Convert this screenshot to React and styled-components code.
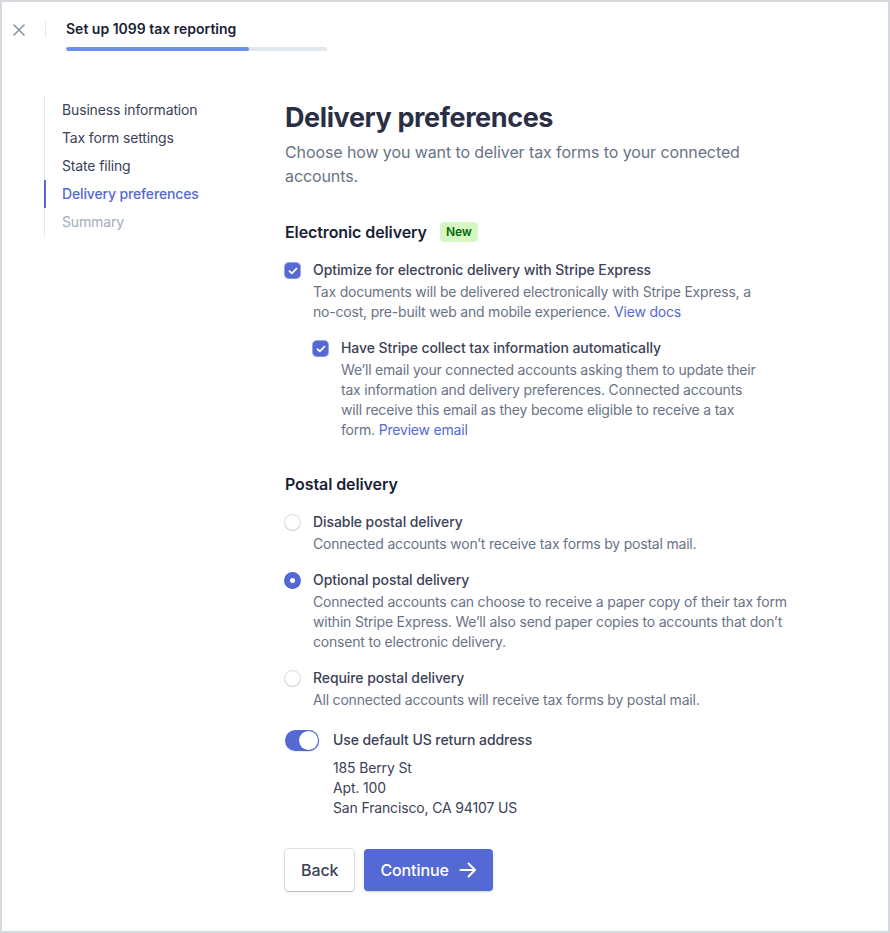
import React from "react";
import styled, { createGlobalStyle } from "styled-components";

const GlobalStyle = createGlobalStyle`
  html, body {
    margin: 0;
    padding: 0;
    background: #fff;
  }
  body {
    font-family: Inter, "Noto Sans", "Liberation Sans", sans-serif;
    color: #3c4257;
    -webkit-font-smoothing: antialiased;
  }
  * { box-sizing: border-box; }
`;

const Frame = styled.div`
  width: 890px;
  height: 933px;
  border: 2px solid #d5d8dd;
  background: #fff;
  overflow: hidden;
`;

const TopBar = styled.header`
  display: flex;
  align-items: flex-start;
  padding: 18px 0 0 10px;
  height: 94px;
`;

const CloseButton = styled.button`
  width: 14px;
  height: 14px;
  padding: 0;
  margin-top: 3px;
  border: 0;
  background: none;
  display: flex;
  align-items: center;
  justify-content: center;
  cursor: pointer;
`;

const Divider = styled.div`
  width: 1px;
  height: 17px;
  background: #e3e8ee;
  margin: 1px 20px 0 19px;
`;

const TitleBlock = styled.div`
  display: flex;
  flex-direction: column;
  gap: 9px;
`;

const Title = styled.div`
  font-size: 14px;
  font-weight: 600;
  color: #1a1f36;
  line-height: 18px;
`;

const Progress = styled.div`
  width: 261px;
  height: 4px;
  border-radius: 2px;
  background: #e3e8ee;
  overflow: hidden;
`;

const ProgressFill = styled.div`
  height: 100%;
  border-radius: 2px;
  background: #6b8ff0;
`;

const Body = styled.div`
  display: flex;
  padding-left: 42px;
`;

const Steps = styled.nav`
  width: 241px;
  flex-shrink: 0;
  align-self: flex-start;
  border-left: 1px solid #e3e8ee;
  display: flex;
  flex-direction: column;
`;

const Step = styled.div`
  font-size: 14px;
  line-height: 28px;
  letter-spacing: -0.15px;
  padding-left: 16px;
  margin-left: -1px;
  border-left: 2px solid ${({ $active }) => ($active ? "#5469d4" : "transparent")};
  color: ${({ $active, $muted }) => ($active ? "#5469d4" : $muted ? "#a3acb9" : "#3c4257")};
  font-weight: ${({ $active }) => ($active ? 500 : 400)};
`;

const Main = styled.main`
  width: 515px;
  display: flex;
  flex-direction: column;
`;

const Heading = styled.h1`
  margin: 4px 0 0;
  font-size: 27px;
  line-height: 36px;
  font-weight: 700;
  color: #2a2f45;
  letter-spacing: -0.4px;
`;

const Lead = styled.p`
  margin: 4px 0 0;
  font-size: 16px;
  line-height: 24px;
  letter-spacing: -0.1px;
  color: #697386;
  max-width: 470px;
`;

const SectionTitle = styled.h2`
  margin: ${({ $top }) => $top}px 0 0;
  display: flex;
  align-items: center;
  gap: 13px;
  font-size: 16px;
  line-height: 24px;
  font-weight: 600;
  letter-spacing: -0.1px;
  color: #1a1f36;
`;

const Badge = styled.span`
  font-size: 12px;
  line-height: 20px;
  font-weight: 600;
  padding: 0 6px;
  border-radius: 4px;
  background: #d7f7c2;
  color: #05690d;
`;

const Option = styled.div`
  display: flex;
  gap: 13px;
  margin-top: ${({ $top }) => $top}px;
  margin-left: ${({ $indent }) => ($indent ? 28 : 0)}px;
`;

const Control = styled.div`
  width: 15px;
  flex-shrink: 0;
  padding-top: 3px;
`;

const Checkbox = styled.span`
  display: flex;
  align-items: center;
  justify-content: center;
  width: 15px;
  height: 15px;
  border-radius: 4px;
  background: #5469d4;
  box-shadow: 0 1px 1px rgba(0, 0, 0, 0.12), 0 0 0 1px rgba(84, 105, 212, 0.6);
`;

const Radio = styled.span`
  display: block;
  width: 15px;
  height: 15px;
  border-radius: 50%;
  background: ${({ $checked }) => ($checked ? "#5469d4" : "#fff")};
  box-shadow: ${({ $checked }) =>
    $checked
      ? "0 1px 1px rgba(0,0,0,0.12), 0 0 0 1px #5469d4"
      : "0 1px 1px rgba(0,0,0,0.1), 0 0 0 1px rgba(60,66,87,0.18)"};
  position: relative;
  &::after {
    content: "";
    display: ${({ $checked }) => ($checked ? "block" : "none")};
    position: absolute;
    left: 5px;
    top: 5px;
    width: 5px;
    height: 5px;
    border-radius: 50%;
    background: #fff;
  }
`;

const OptionText = styled.div`
  display: flex;
  flex-direction: column;
`;

const Label = styled.div`
  font-size: 14px;
  line-height: 20px;
  font-weight: 500;
  letter-spacing: -0.08px;
  color: #3c4257;
`;

const Help = styled.div`
  font-size: 14px;
  line-height: 20px;
  letter-spacing: -0.2px;
  color: #697386;
  margin-top: 2px;
  max-width: ${({ $width }) => $width}px;
`;

const Link = styled.a`
  color: #5469d4;
  text-decoration: none;
`;

const ToggleRow = styled.div`
  display: flex;
  gap: 14px;
  margin-top: 20px;
`;

const Toggle = styled.span`
  width: 34px;
  height: 21px;
  flex-shrink: 0;
  border-radius: 11px;
  background: #5469d4;
  display: flex;
  align-items: center;
  justify-content: flex-end;
  padding-right: 1px;
  box-shadow: 0 1px 1px rgba(0, 0, 0, 0.1);
`;

const Knob = styled.span`
  width: 19px;
  height: 19px;
  border-radius: 50%;
  background: #fff;
  box-shadow: 0 0 0 1px #5469d4, 0 1px 2px rgba(0, 0, 0, 0.2);
`;

const Address = styled.div`
  margin-top: 8px;
  font-size: 14px;
  line-height: 20px;
  letter-spacing: -0.15px;
  color: #3c4257;
`;

const Actions = styled.div`
  display: flex;
  gap: 10px;
  margin-top: 31px;
`;

const Button = styled.button`
  height: 42px;
  padding: 0 16px;
  display: flex;
  align-items: center;
  gap: 10px;
  font-family: inherit;
  font-size: 16px;
  font-weight: 500;
  letter-spacing: -0.1px;
  border-radius: 4px;
  border: 0;
  cursor: pointer;
  color: ${({ $primary }) => ($primary ? "#fff" : "#3c4257")};
  background: ${({ $primary }) => ($primary ? "#5469d4" : "#fff")};
  box-shadow: ${({ $primary }) =>
    $primary
      ? "0 1px 1px rgba(0,0,0,0.12), 0 2px 5px rgba(60,66,87,0.08)"
      : "0 0 0 1px rgba(60,66,87,0.16), 0 2px 5px rgba(60,66,87,0.08), 0 1px 1px rgba(0,0,0,0.12)"};
`;

const Check = () => (
  <svg width="10" height="8" viewBox="0 0 10 8" fill="none">
    <path d="M1.5 4.2L3.8 6.4L8.5 1.6" stroke="#fff" strokeWidth="1.8" strokeLinecap="round" strokeLinejoin="round" />
  </svg>
);

const steps = [
  { label: "Business information" },
  { label: "Tax form settings" },
  { label: "State filing" },
  { label: "Delivery preferences", active: true },
  { label: "Summary", muted: true },
];

export default function App() {
  return (
    <>
      <GlobalStyle />
      <Frame>
        <TopBar>
          <CloseButton aria-label="Close">
            <svg width="12" height="12" viewBox="0 0 12 12">
              <path d="M1 1L11 11M11 1L1 11" stroke="#8792a2" strokeWidth="1.5" strokeLinecap="round" />
            </svg>
          </CloseButton>
          <Divider />
          <TitleBlock>
            <Title>Set up 1099 tax reporting</Title>
            <Progress>
              <ProgressFill style={{ width: "70%" }} />
            </Progress>
          </TitleBlock>
        </TopBar>

        <Body>
          <Steps>
            {steps.map((s) => (
              <Step key={s.label} $active={s.active} $muted={s.muted}>
                {s.label}
              </Step>
            ))}
          </Steps>

          <Main>
            <Heading>Delivery preferences</Heading>
            <Lead>Choose how you want to deliver tax forms to your connected accounts.</Lead>

            <SectionTitle $top={32}>
              Electronic delivery <Badge>New</Badge>
            </SectionTitle>

            <Option $top={16}>
              <Control>
                <Checkbox><Check /></Checkbox>
              </Control>
              <OptionText>
                <Label>Optimize for electronic delivery with Stripe Express</Label>
                <Help $width={460}>
                  Tax documents will be delivered electronically with Stripe Express, a no-cost, pre-built web
                  and mobile experience. <Link href="#">View docs</Link>
                </Help>
              </OptionText>
            </Option>

            <Option $top={16} $indent>
              <Control>
                <Checkbox><Check /></Checkbox>
              </Control>
              <OptionText>
                <Label>Have Stripe collect tax information automatically</Label>
                <Help $width={420}>
                  We’ll email your connected accounts asking them to update their tax information and delivery
                  preferences. Connected accounts will receive this email as they become eligible to receive a tax
                  form. <Link href="#">Preview email</Link>
                </Help>
              </OptionText>
            </Option>

            <SectionTitle $top={32}>Postal delivery</SectionTitle>

            <Option $top={16}>
              <Control>
                <Radio />
              </Control>
              <OptionText>
                <Label>Disable postal delivery</Label>
                <Help $width={490}>Connected accounts won’t receive tax forms by postal mail.</Help>
              </OptionText>
            </Option>

            <Option $top={16}>
              <Control>
                <Radio $checked />
              </Control>
              <OptionText>
                <Label>Optional postal delivery</Label>
                <Help $width={490}>
                  Connected accounts can choose to receive a paper copy of their tax form within Stripe Express.
                  We’ll also send paper copies to accounts that don’t consent to electronic delivery.
                </Help>
              </OptionText>
            </Option>

            <Option $top={16}>
              <Control>
                <Radio />
              </Control>
              <OptionText>
                <Label>Require postal delivery</Label>
                <Help $width={490}>All connected accounts will receive tax forms by postal mail.</Help>
              </OptionText>
            </Option>

            <ToggleRow>
              <Toggle>
                <Knob />
              </Toggle>
              <OptionText>
                <Label>Use default US return address</Label>
                <Address>
                  185 Berry St
                  <br />
                  Apt. 100
                  <br />
                  San Francisco, CA 94107 US
                </Address>
              </OptionText>
            </ToggleRow>

            <Actions>
              <Button>Back</Button>
              <Button $primary>
                Continue
                <svg width="18" height="16" viewBox="0 0 18 16" fill="none">
                  <path d="M1.5 8H16M9.5 1.5L16 8L9.5 14.5" stroke="#fff" strokeWidth="2" strokeLinecap="round" strokeLinejoin="round" />
                </svg>
              </Button>
            </Actions>
          </Main>
        </Body>
      </Frame>
    </>
  );
}
